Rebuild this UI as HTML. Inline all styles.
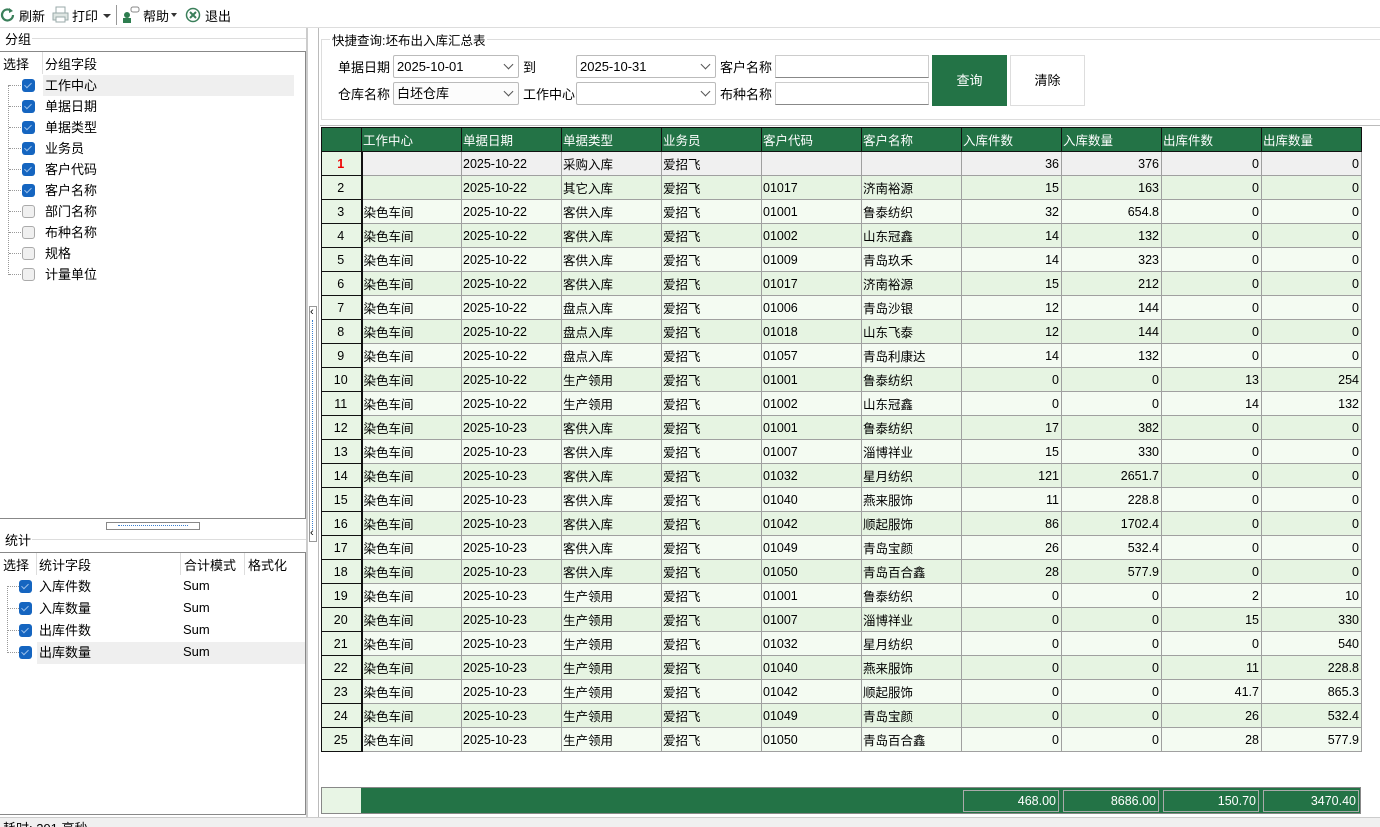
<!DOCTYPE html>
<html><head><meta charset="utf-8"><style>
*{box-sizing:border-box;margin:0;padding:0}
body{width:1380px;height:827px;position:relative;background:#fff;font-family:"Liberation Sans","Noto Sans CJK SC",sans-serif;font-size:12.5px;color:#000;overflow:hidden}
.a{position:absolute}
.cb{position:absolute;width:13px;height:13px;border-radius:3px;background:#1565c0}
.cb::after{content:"";position:absolute;left:4px;top:2px;width:3px;height:6px;border:solid #9cc0ea;border-width:0 1px 1px 0;transform:rotate(45deg)}
.ub{position:absolute;width:13px;height:13px;border-radius:3px;background:#f0f0f0;border:1px solid #aaa}
table{border-collapse:collapse;table-layout:fixed;position:absolute;left:321px;top:127px}
td{height:24px;border:1px solid #a0a0a0;padding:0 2px 0 1px;white-space:nowrap;overflow:hidden}
th{height:24px;background:#237346;color:#fff;font-weight:normal;text-align:left;padding:0 1px;border:1px solid #111}
td.n{text-align:center;background:#e8f5e5;border:1px solid #111;border-width:1px 2px 1px 1px}
td.r{text-align:right}
tr.o td{background:#f4fbf2}
tr.e td{background:#e6f4e2}
tr.s td{background:#f0f0f0}
tr td.n{background:#e8f5e5}
.inp{position:absolute;height:23px;border:1px solid #bbb;border-radius:2px;background:#fff;padding-left:3px;line-height:21px;font-size:13px}
.inp .v{position:absolute;right:6px;top:5px;width:7px;height:7px;border:solid #555;border-width:0 1px 1px 0;transform:rotate(45deg)}
.lbl{position:absolute;font-size:13px}
</style></head><body>
<div class="a" style="left:0;top:0;width:1380px;height:30px;background:#fff"></div>
<svg class="a" style="left:0;top:7px" width="16" height="16"><path d="M13 8a5.5 5.5 0 1 1-2-4.3" fill="none" stroke="#3a7f5a" stroke-width="2.2"/><path d="M9 1l4 3-4 2z" fill="#3a7f5a"/></svg>
<div class="a" style="left:19px;top:6px;font-size:13px">刷新</div>
<svg class="a" style="left:52px;top:6px" width="17" height="17"><rect x="4" y="1" width="9" height="6" fill="#fff" stroke="#9aa" /><rect x="1" y="7" width="15" height="7" fill="#dfe6e3" stroke="#9aa"/><rect x="4" y="11" width="9" height="5" fill="#fff" stroke="#9aa"/></svg>
<div class="a" style="left:72px;top:6px;font-size:13px">打印</div>
<div class="a" style="left:103px;top:14px;border:4px solid transparent;border-top:4px solid #333"></div>
<div class="a" style="left:116px;top:5px;width:1px;height:20px;background:#999"></div>
<svg class="a" style="left:122px;top:6px" width="18" height="17"><circle cx="5" cy="9" r="3" fill="#2e7d4f"/><rect x="1" y="12" width="8" height="5" fill="#2e7d4f"/><rect x="9" y="1" width="8" height="5" rx="2" fill="#fff" stroke="#888"/></svg>
<div class="a" style="left:143px;top:6px;font-size:13px">帮助</div>
<div class="a" style="left:171px;top:13px;border:3px solid transparent;border-top:4px solid #333"></div>
<svg class="a" style="left:185px;top:7px" width="16" height="16"><circle cx="8" cy="8" r="6.5" fill="none" stroke="#3a7f5a" stroke-width="1.5"/><path d="M5 5l6 6M11 5l-6 6" stroke="#3a7f5a" stroke-width="2"/></svg>
<div class="a" style="left:205px;top:6px;font-size:13px">退出</div>
<div class="a" style="left:0;top:27px;width:1380px;height:1px;background:#ddd"></div>

<div class="a" style="left:5px;top:29px;font-size:13px">分组</div>
<div class="a" style="left:32px;top:38px;width:274px;height:1px;background:#ddd"></div>
<div class="a" style="left:0;top:51px;width:306px;height:468px;border:1px solid #888;border-left:none"></div>
<div class="a" style="left:3px;top:54px;font-size:13px">选择</div>
<div class="a" style="left:42px;top:52px;width:1px;height:22px;background:#ddd"></div>
<div class="a" style="left:45px;top:54px;font-size:13px">分组字段</div>
<div class="a" style="left:43px;top:75px;width:251px;height:21px;background:#efefef"></div>
<div class="a" style="left:8px;top:85px;width:1px;height:190px;border-left:1px dotted #999"></div>
<div id="g"></div>

<div class="a" style="left:106px;top:522px;width:94px;height:8px;border:1px solid #888;background:#fff"></div>
<div class="a" style="left:118px;top:525px;width:70px;border-top:1px dotted #3a7fd0"></div>
<div class="a" style="left:5px;top:530px;font-size:13px">统计</div>
<div class="a" style="left:32px;top:539px;width:274px;height:1px;background:#ddd"></div>
<div class="a" style="left:0;top:552px;width:306px;height:263px;border:1px solid #888;border-left:none"></div>
<div class="a" style="left:3px;top:555px;font-size:13px">选择</div>
<div class="a" style="left:36px;top:553px;width:1px;height:22px;background:#ddd"></div>
<div class="a" style="left:39px;top:555px;font-size:13px">统计字段</div>
<div class="a" style="left:180px;top:553px;width:1px;height:22px;background:#ddd"></div>
<div class="a" style="left:184px;top:555px;font-size:13px">合计模式</div>
<div class="a" style="left:244px;top:553px;width:1px;height:22px;background:#ddd"></div>
<div class="a" style="left:248px;top:555px;font-size:13px">格式化</div>
<div class="a" style="left:37px;top:642px;width:268px;height:22px;background:#efefef"></div>
<div class="a" style="left:7px;top:586px;width:1px;height:67px;border-left:1px dotted #999"></div>
<div id="s"></div>

<div class="a" style="left:306px;top:28px;width:2px;height:790px;background:#ccc"></div>
<div class="a" style="left:309px;top:306px;width:8px;height:236px;border:1px solid #999;background:#fff"></div>
<div class="a" style="left:312px;top:320px;height:210px;border-left:1px dotted #3a7fd0"></div>
<div class="a" style="left:310px;top:306px;font-size:11px">‹</div>
<div class="a" style="left:310px;top:527px;font-size:11px">‹</div>
<div class="a" style="left:318px;top:28px;width:1px;height:790px;background:#bbb"></div>

<div class="a" style="left:321px;top:39px;width:1059px;height:1px;background:#ddd"></div>
<div class="a" style="left:321px;top:39px;width:1px;height:80px;background:#ddd"></div>
<div class="a" style="left:321px;top:119px;width:1059px;height:1px;background:#ddd"></div>
<div class="a" style="left:330px;top:30px;background:#fff;padding:0 2px;font-size:12.5px">快捷查询:坯布出入库汇总表</div>
<div class="lbl" style="left:338px;top:57px">单据日期</div>
<div class="inp" style="left:393px;top:55px;width:126px">2025-10-01<span class="v"></span></div>
<div class="lbl" style="left:523px;top:57px">到</div>
<div class="inp" style="left:576px;top:55px;width:140px">2025-10-31<span class="v"></span></div>
<div class="lbl" style="left:720px;top:57px">客户名称</div>
<div class="a" style="left:775px;top:55px;width:154px;height:23px;border:1px solid #ccc;border-bottom-color:#888"></div>
<div class="lbl" style="left:338px;top:84px">仓库名称</div>
<div class="inp" style="left:393px;top:82px;width:126px;background:#fcfcfc">白坯仓库<span class="v"></span></div>
<div class="lbl" style="left:523px;top:84px">工作中心</div>
<div class="inp" style="left:576px;top:82px;width:140px"><span class="v"></span></div>
<div class="lbl" style="left:720px;top:84px">布种名称</div>
<div class="a" style="left:775px;top:82px;width:154px;height:23px;border:1px solid #ccc;border-bottom-color:#888"></div>
<div class="a" style="left:932px;top:55px;width:75px;height:51px;background:#237346;color:#fff;text-align:center;line-height:51px;font-size:13px">查询</div>
<div class="a" style="left:1010px;top:55px;width:75px;height:51px;border:1px solid #ddd;text-align:center;line-height:49px;font-size:13px">清除</div>
<div class="a" style="left:320px;top:125px;width:1060px;height:1px;background:#bbb"></div>

<table id="t">
<colgroup><col style="width:40px"><col style="width:100px"><col style="width:100px"><col style="width:100px"><col style="width:100px"><col style="width:100px"><col style="width:100px"><col style="width:100px"><col style="width:100px"><col style="width:100px"><col style="width:100px"></colgroup>
<thead><tr><th></th><th>工作中心</th><th>单据日期</th><th>单据类型</th><th>业务员</th><th>客户代码</th><th>客户名称</th><th>入库件数</th><th>入库数量</th><th>出库件数</th><th>出库数量</th></tr></thead>
<tbody id="tb"></tbody></table>

<div class="a" style="left:321px;top:787px;width:1040px;height:27px;background:#237346;border:1px solid #888"></div>
<div class="a" style="left:322px;top:788px;width:39px;height:25px;background:#e8f5e5"></div>
<div class="a" style="left:963px;top:790px;width:96px;height:22px;border:1px solid #aaa;color:#fff;text-align:right;padding-right:2px;line-height:20px">468.00</div>
<div class="a" style="left:1063px;top:790px;width:96px;height:22px;border:1px solid #aaa;color:#fff;text-align:right;padding-right:2px;line-height:20px">8686.00</div>
<div class="a" style="left:1163px;top:790px;width:96px;height:22px;border:1px solid #aaa;color:#fff;text-align:right;padding-right:2px;line-height:20px">150.70</div>
<div class="a" style="left:1263px;top:790px;width:96px;height:22px;border:1px solid #aaa;color:#fff;text-align:right;padding-right:2px;line-height:20px">3470.40</div>
<div class="a" style="left:0;top:817px;width:1380px;height:10px;background:#f0f0f0;border-top:1px solid #ccc;overflow:hidden"><div style="position:absolute;left:3px;top:4px;font-size:13px;line-height:14px">耗时: 291 毫秒</div></div>

<script>
var g=[["工作中心",1],["单据日期",1],["单据类型",1],["业务员",1],["客户代码",1],["客户名称",1],["部门名称",0],["布种名称",0],["规格",0],["计量单位",0]],h="";
g.forEach(function(x,i){var y=79+i*21;h+='<div class="a" style="left:9px;top:'+(y+6)+'px;width:12px;border-top:1px dotted #999"></div><div class="'+(x[1]?'cb':'ub')+'" style="left:22px;top:'+y+'px"></div><div class="a" style="left:45px;top:'+(y-4)+'px;font-size:13px">'+x[0]+'</div>';});
document.getElementById('g').outerHTML=h;
var s=["入库件数","入库数量","出库件数","出库数量"];h="";
s.forEach(function(x,i){var y=580+i*22;h+='<div class="a" style="left:8px;top:'+(y+6)+'px;width:11px;border-top:1px dotted #999"></div><div class="cb" style="left:19px;top:'+y+'px"></div><div class="a" style="left:39px;top:'+(y-4)+'px;font-size:13px">'+x+'</div><div class="a" style="left:183px;top:'+(y-2)+'px;font-size:13px">Sum</div>';});
document.getElementById('s').outerHTML=h;
var R=[
["","2025-10-22","采购入库","","",36,376,0,0],
["","2025-10-22","其它入库","01017","济南裕源",15,163,0,0],
["染色车间","2025-10-22","客供入库","01001","鲁泰纺织",32,654.8,0,0],
["染色车间","2025-10-22","客供入库","01002","山东冠鑫",14,132,0,0],
["染色车间","2025-10-22","客供入库","01009","青岛玖禾",14,323,0,0],
["染色车间","2025-10-22","客供入库","01017","济南裕源",15,212,0,0],
["染色车间","2025-10-22","盘点入库","01006","青岛沙银",12,144,0,0],
["染色车间","2025-10-22","盘点入库","01018","山东飞泰",12,144,0,0],
["染色车间","2025-10-22","盘点入库","01057","青岛利康达",14,132,0,0],
["染色车间","2025-10-22","生产领用","01001","鲁泰纺织",0,0,13,254],
["染色车间","2025-10-22","生产领用","01002","山东冠鑫",0,0,14,132],
["染色车间","2025-10-23","客供入库","01001","鲁泰纺织",17,382,0,0],
["染色车间","2025-10-23","客供入库","01007","淄博祥业",15,330,0,0],
["染色车间","2025-10-23","客供入库","01032","星月纺织",121,2651.7,0,0],
["染色车间","2025-10-23","客供入库","01040","燕来服饰",11,228.8,0,0],
["染色车间","2025-10-23","客供入库","01042","顺起服饰",86,1702.4,0,0],
["染色车间","2025-10-23","客供入库","01049","青岛宝颜",26,532.4,0,0],
["染色车间","2025-10-23","客供入库","01050","青岛百合鑫",28,577.9,0,0],
["染色车间","2025-10-23","生产领用","01001","鲁泰纺织",0,0,2,10],
["染色车间","2025-10-23","生产领用","01007","淄博祥业",0,0,15,330],
["染色车间","2025-10-23","生产领用","01032","星月纺织",0,0,0,540],
["染色车间","2025-10-23","生产领用","01040","燕来服饰",0,0,11,228.8],
["染色车间","2025-10-23","生产领用","01042","顺起服饰",0,0,41.7,865.3],
["染色车间","2025-10-23","生产领用","01049","青岛宝颜",0,0,26,532.4],
["染色车间","2025-10-23","生产领用","01050","青岛百合鑫",0,0,28,577.9]];
h="";
R.forEach(function(r,i){var c=i==0?'s':(i%2?'e':'o');h+='<tr class="'+c+'"><td class="n"'+(i==0?' style="color:#e00;font-weight:bold"':'')+'>'+(i+1)+'</td><td>'+r[0]+'</td><td>'+r[1]+'</td><td>'+r[2]+'</td><td>爱招飞</td><td>'+r[3]+'</td><td>'+r[4]+'</td><td class="r">'+r[5]+'</td><td class="r">'+r[6]+'</td><td class="r">'+r[7]+'</td><td class="r">'+r[8]+'</td></tr>';});
document.getElementById('tb').innerHTML=h;
</script>
</body></html>
